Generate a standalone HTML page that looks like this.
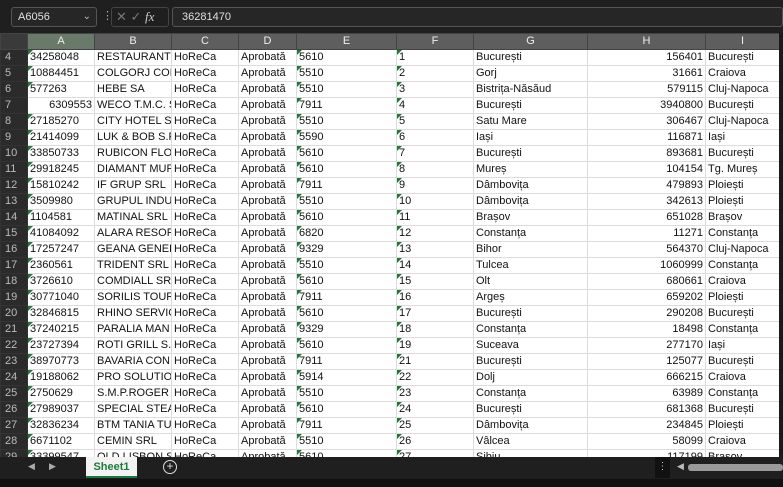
<!DOCTYPE html>
<html><head><meta charset="utf-8"><style>
*{margin:0;padding:0;box-sizing:border-box}
body{width:783px;height:487px;overflow:hidden;background:#1f1f1f;font-family:"Liberation Sans",sans-serif;position:relative}
.fb{position:absolute;top:0;left:0;width:783px;height:33px;background:#1f1f1f}
.nb{position:absolute;left:11px;top:7px;width:86px;height:20px;border:1px solid #555;border-radius:3px;background:#262626;color:#e0e0e0;font-size:11px;line-height:18px;padding-left:6px}
.nb span{position:absolute;right:5px;top:0;color:#bbb;font-size:10px}
.dots{position:absolute;left:102px;top:9px;color:#aaa;font-size:11px}
.fx{position:absolute;left:111px;top:7px;width:58px;height:20px;border:1px solid #444;border-radius:3px;color:#777;font-size:13px;line-height:18px;padding-left:4px}
.fx i{color:#ccc;font-family:"Liberation Serif",serif;font-size:13px}
.fv{position:absolute;left:172px;top:7px;width:611px;height:20px;border:1px solid #555;border-radius:3px;background:#262626;color:#e0e0e0;font-size:11px;line-height:18px;padding-left:9px}
table{position:absolute;left:0;top:33px;border-collapse:collapse;table-layout:fixed;width:779px;background:#fff}
td,th{height:16px;font-size:11px;white-space:nowrap;overflow:hidden;padding:0 2px;border:1px solid #dcdcdc;color:#111;font-weight:normal;position:relative;line-height:15px}
th{background:#5e5e5e;color:#eee;border-color:#444;text-align:center}
th.sel{background:#6a7a6a}
td.r{background:#2b2b2b;color:#bbb;border-color:#333;text-align:left;padding-left:4px}
.n{text-align:right}
.t::before{content:"";position:absolute;left:0;top:0;border-top:5px solid #1e7a3c;border-right:5px solid transparent}
.rs{position:absolute;right:0;top:33px;width:4px;height:424px;background:#1a1a1a}
.tb{position:absolute;left:0;top:457px;width:783px;height:22px;background:#1f1f1f}
.tab{position:absolute;left:86px;top:0;width:51px;height:21px;background:#f3f3f3;color:#1e7a3c;font-weight:bold;font-size:11px;text-align:center;line-height:20px;border-bottom:2px solid #1e7a3c}
.ar{position:absolute;top:4px;color:#aaa;font-size:9px}
.plus{position:absolute;left:163px;top:3px;width:14px;height:14px;border:1px solid #ddd;border-radius:50%;color:#ddd;font-size:12px;line-height:11px;text-align:center}
.hs{position:absolute;left:655px;top:0;width:15px;height:21px;background:#111;color:#ccc;font-size:10px;text-align:center;line-height:20px}
.sb{position:absolute;left:688px;top:7px;width:95px;height:7px;background:#9a9a9a;border-radius:3px}
.bt{position:absolute;left:0;top:479px;width:783px;height:8px;background:#111}
</style></head><body>
<div class="fb">
<div class="nb">A6056<span>&#8964;</span></div>
<div class="dots">&#8942;</div>
<div class="fx">&#10005; &#10003; <i>fx</i></div>
<div class="fv">36281470</div>
</div>
<table>
<colgroup><col style="width:27px"><col style="width:67px"><col style="width:77px"><col style="width:67px"><col style="width:58px"><col style="width:100px"><col style="width:77px"><col style="width:114px"><col style="width:118px"><col style="width:74px"></colgroup>
<tr><th style="background:#3a3a3a"></th><th class="sel">A</th><th>B</th><th>C</th><th>D</th><th>E</th><th>F</th><th>G</th><th>H</th><th>I</th></tr>
<tr><td class="r">4</td><td class="t">34258048</td><td>RESTAURANT "</td><td>HoReCa</td><td>Aprobată</td><td class="t">5610</td><td class="t">1</td><td>București</td><td class="n">156401</td><td>București</td></tr>
<tr><td class="r">5</td><td class="t">10884451</td><td>COLGORJ COM</td><td>HoReCa</td><td>Aprobată</td><td class="t">5510</td><td class="t">2</td><td>Gorj</td><td class="n">31661</td><td>Craiova</td></tr>
<tr><td class="r">6</td><td class="t">577263</td><td>HEBE SA</td><td>HoReCa</td><td>Aprobată</td><td class="t">5510</td><td class="t">3</td><td>Bistrița-Năsăud</td><td class="n">579115</td><td>Cluj-Napoca</td></tr>
<tr><td class="r">7</td><td class="n">6309553</td><td>WECO T.M.C. S</td><td>HoReCa</td><td>Aprobată</td><td class="t">7911</td><td class="t">4</td><td>București</td><td class="n">3940800</td><td>București</td></tr>
<tr><td class="r">8</td><td class="t">27185270</td><td>CITY HOTEL SA</td><td>HoReCa</td><td>Aprobată</td><td class="t">5510</td><td class="t">5</td><td>Satu Mare</td><td class="n">306467</td><td>Cluj-Napoca</td></tr>
<tr><td class="r">9</td><td class="t">21414099</td><td>LUK &amp; BOB S.R.</td><td>HoReCa</td><td>Aprobată</td><td class="t">5590</td><td class="t">6</td><td>Iași</td><td class="n">116871</td><td>Iași</td></tr>
<tr><td class="r">10</td><td class="t">33850733</td><td>RUBICON FLOR</td><td>HoReCa</td><td>Aprobată</td><td class="t">5610</td><td class="t">7</td><td>București</td><td class="n">893681</td><td>București</td></tr>
<tr><td class="r">11</td><td class="t">29918245</td><td>DIAMANT MUR</td><td>HoReCa</td><td>Aprobată</td><td class="t">5610</td><td class="t">8</td><td>Mureș</td><td class="n">104154</td><td>Tg. Mureș</td></tr>
<tr><td class="r">12</td><td class="t">15810242</td><td>IF GRUP SRL</td><td>HoReCa</td><td>Aprobată</td><td class="t">7911</td><td class="t">9</td><td>Dâmbovița</td><td class="n">479893</td><td>Ploiești</td></tr>
<tr><td class="r">13</td><td class="t">3509980</td><td>GRUPUL INDUS</td><td>HoReCa</td><td>Aprobată</td><td class="t">5510</td><td class="t">10</td><td>Dâmbovița</td><td class="n">342613</td><td>Ploiești</td></tr>
<tr><td class="r">14</td><td class="t">1104581</td><td>MATINAL SRL</td><td>HoReCa</td><td>Aprobată</td><td class="t">5610</td><td class="t">11</td><td>Brașov</td><td class="n">651028</td><td>Brașov</td></tr>
<tr><td class="r">15</td><td class="t">41084092</td><td>ALARA RESORT</td><td>HoReCa</td><td>Aprobată</td><td class="t">6820</td><td class="t">12</td><td>Constanța</td><td class="n">11271</td><td>Constanța</td></tr>
<tr><td class="r">16</td><td class="t">17257247</td><td>GEANA GENER</td><td>HoReCa</td><td>Aprobată</td><td class="t">9329</td><td class="t">13</td><td>Bihor</td><td class="n">564370</td><td>Cluj-Napoca</td></tr>
<tr><td class="r">17</td><td class="t">2360561</td><td>TRIDENT SRL</td><td>HoReCa</td><td>Aprobată</td><td class="t">5510</td><td class="t">14</td><td>Tulcea</td><td class="n">1060999</td><td>Constanța</td></tr>
<tr><td class="r">18</td><td class="t">3726610</td><td>COMDIALL SRL</td><td>HoReCa</td><td>Aprobată</td><td class="t">5610</td><td class="t">15</td><td>Olt</td><td class="n">680661</td><td>Craiova</td></tr>
<tr><td class="r">19</td><td class="t">30771040</td><td>SORILIS TOUR S</td><td>HoReCa</td><td>Aprobată</td><td class="t">7911</td><td class="t">16</td><td>Argeș</td><td class="n">659202</td><td>Ploiești</td></tr>
<tr><td class="r">20</td><td class="t">32846815</td><td>RHINO SERVICE</td><td>HoReCa</td><td>Aprobată</td><td class="t">5610</td><td class="t">17</td><td>București</td><td class="n">290208</td><td>București</td></tr>
<tr><td class="r">21</td><td class="t">37240215</td><td>PARALIA MAN</td><td>HoReCa</td><td>Aprobată</td><td class="t">9329</td><td class="t">18</td><td>Constanța</td><td class="n">18498</td><td>Constanța</td></tr>
<tr><td class="r">22</td><td class="t">23727394</td><td>ROTI GRILL S.R.</td><td>HoReCa</td><td>Aprobată</td><td class="t">5610</td><td class="t">19</td><td>Suceava</td><td class="n">277170</td><td>Iași</td></tr>
<tr><td class="r">23</td><td class="t">38970773</td><td>BAVARIA CON</td><td>HoReCa</td><td>Aprobată</td><td class="t">7911</td><td class="t">21</td><td>București</td><td class="n">125077</td><td>București</td></tr>
<tr><td class="r">24</td><td class="t">19188062</td><td>PRO SOLUTION</td><td>HoReCa</td><td>Aprobată</td><td class="t">5914</td><td class="t">22</td><td>Dolj</td><td class="n">666215</td><td>Craiova</td></tr>
<tr><td class="r">25</td><td class="t">2750629</td><td>S.M.P.ROGER S</td><td>HoReCa</td><td>Aprobată</td><td class="t">5510</td><td class="t">23</td><td>Constanța</td><td class="n">63989</td><td>Constanța</td></tr>
<tr><td class="r">26</td><td class="t">27989037</td><td>SPECIAL STEAK</td><td>HoReCa</td><td>Aprobată</td><td class="t">5610</td><td class="t">24</td><td>București</td><td class="n">681368</td><td>București</td></tr>
<tr><td class="r">27</td><td class="t">32836234</td><td>BTM TANIA TUI</td><td>HoReCa</td><td>Aprobată</td><td class="t">7911</td><td class="t">25</td><td>Dâmbovița</td><td class="n">234845</td><td>Ploiești</td></tr>
<tr><td class="r">28</td><td class="t">6671102</td><td>CEMIN SRL</td><td>HoReCa</td><td>Aprobată</td><td class="t">5510</td><td class="t">26</td><td>Vâlcea</td><td class="n">58099</td><td>Craiova</td></tr>
<tr><td class="r">29</td><td class="t">33399547</td><td>OLD LISBON SR</td><td>HoReCa</td><td>Aprobată</td><td class="t">5610</td><td class="t">27</td><td>Sibiu</td><td class="n">117199</td><td>Brașov</td></tr>
</table>
<div class="rs"></div>
<div class="tb">
<span class="ar" style="left:28px">&#9664;</span><span class="ar" style="left:49px">&#9654;</span>
<div class="tab">Sheet1</div>
<div class="plus">+</div>
<div class="hs">&#8942;</div>
<span class="ar" style="left:677px;color:#bbb">&#9664;</span>
<div class="sb"></div>
</div>
<div class="bt"></div>
</body></html>
